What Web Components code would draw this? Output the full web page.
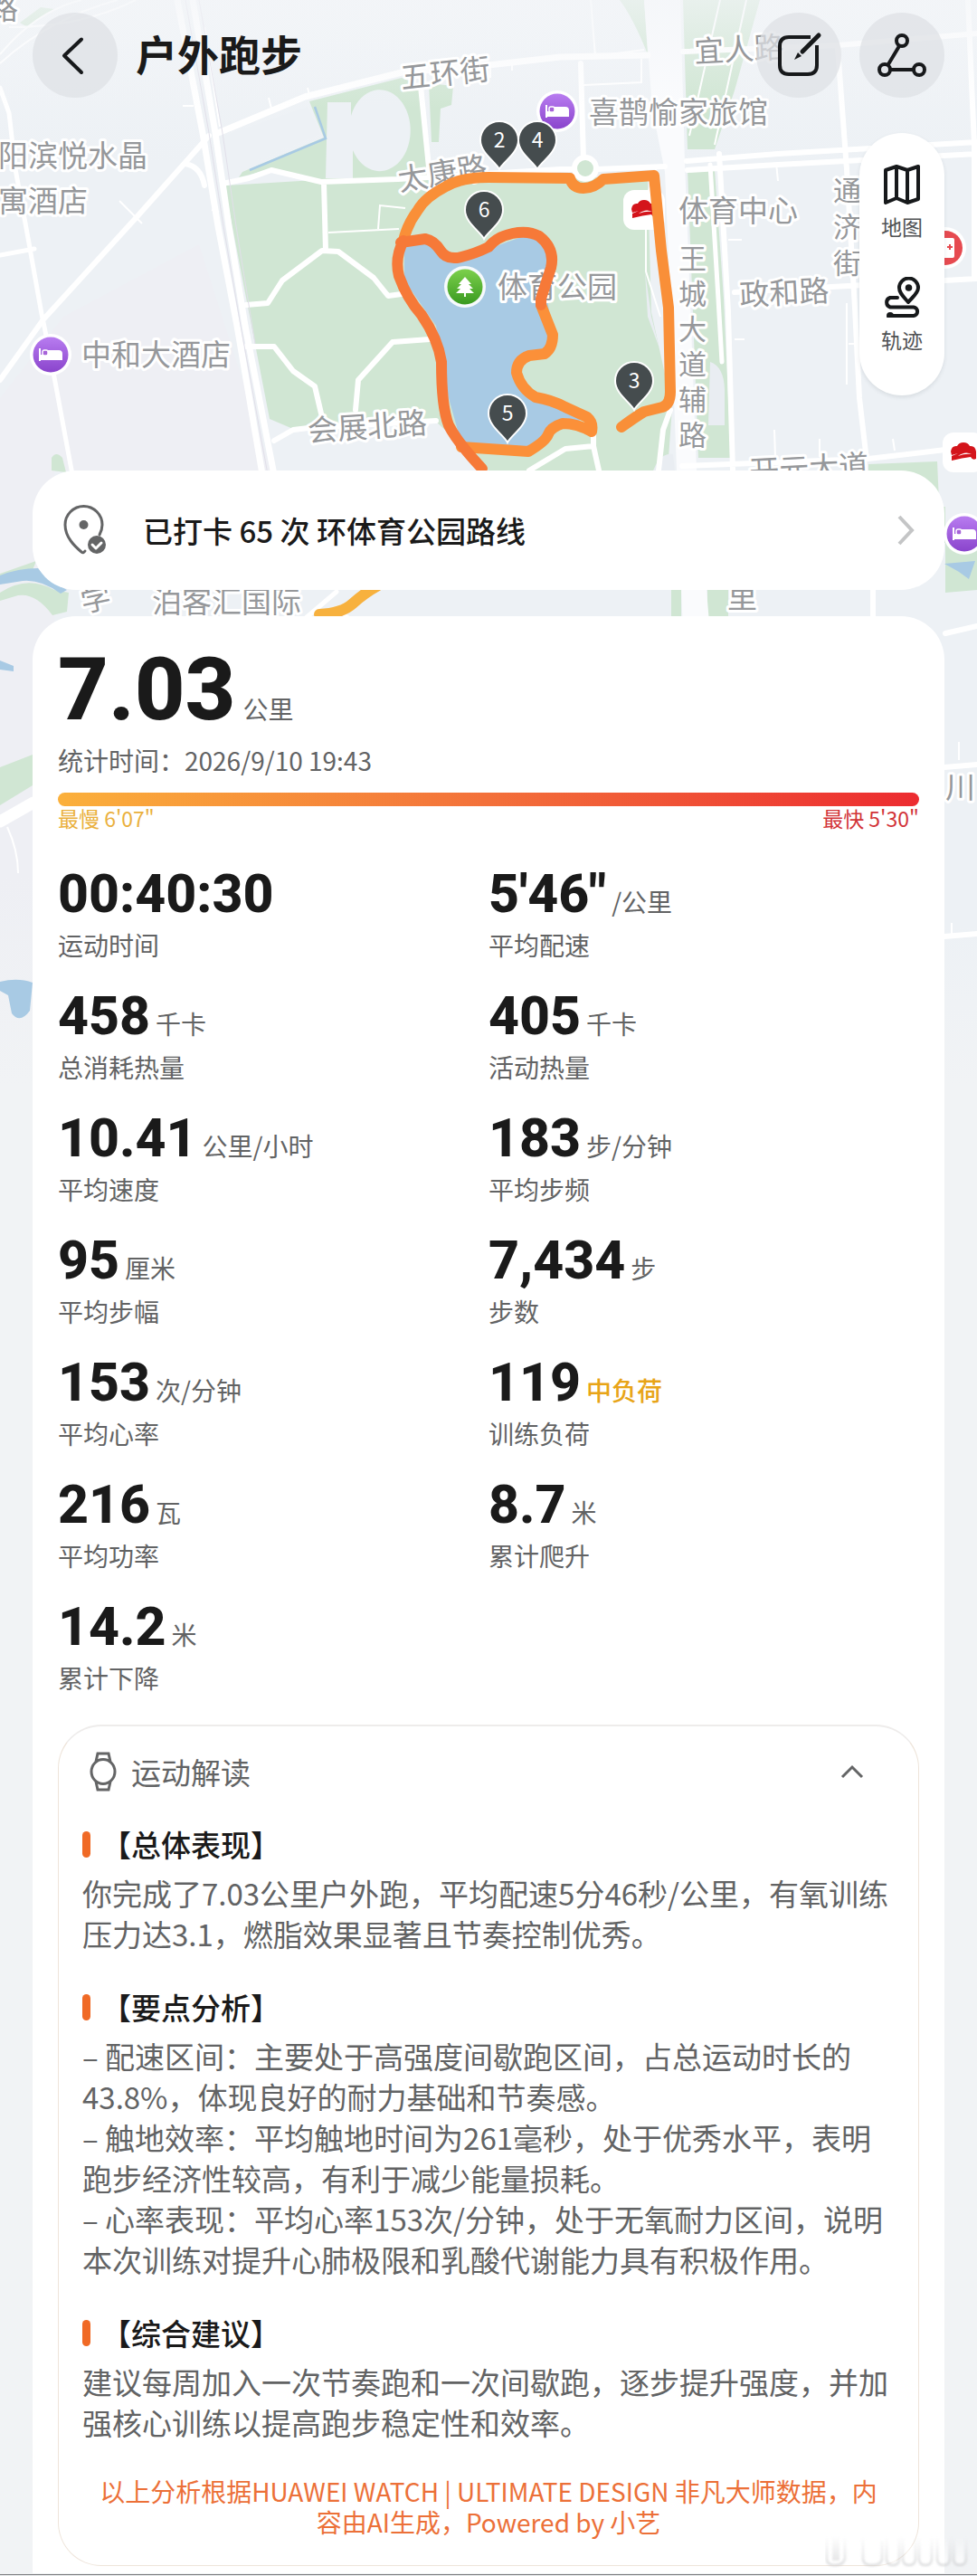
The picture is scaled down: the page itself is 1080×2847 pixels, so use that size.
<!DOCTYPE html>
<html lang="zh-CN">
<head>
<meta charset="utf-8">
<meta name="viewport" content="width=device-width, initial-scale=1">
<title>户外跑步</title>
<style>
  body {
    margin: 0;
    background: #f1f3f5;
    color: #1a1a1a;
    font-family: "Noto Sans CJK SC", sans-serif;
    --muted: #626364;
    --accent: #f06a26;
    --number-font: Roboto, "Noto Sans CJK SC", sans-serif;
  }
</style>
</head>
<body>
<run-page>
  <run-map slot="map"></run-map>
  <run-header slot="top">户外跑步</run-header>
  <map-tools slot="top"></map-tools>
  <route-card>已打卡 65 次 环体育公园路线</route-card>
  <summary-card>
    <run-distance slot="hero"><span>7.03</span><span slot="unit">公里</span><span slot="date">统计时间：2026/9/10 19:43</span></run-distance>
    <pace-bar slot="hero"><span slot="slow">最慢 6'07"</span><span slot="fast">最快 5'30"</span></pace-bar>
    <run-stat>00:40:30<span slot="label">运动时间</span></run-stat>
    <run-stat>5'46"<span slot="unit">/公里</span><span slot="label">平均配速</span></run-stat>
    <run-stat>458<span slot="unit">千卡</span><span slot="label">总消耗热量</span></run-stat>
    <run-stat>405<span slot="unit">千卡</span><span slot="label">活动热量</span></run-stat>
    <run-stat>10.41<span slot="unit">公里/小时</span><span slot="label">平均速度</span></run-stat>
    <run-stat>183<span slot="unit">步/分钟</span><span slot="label">平均步频</span></run-stat>
    <run-stat>95<span slot="unit">厘米</span><span slot="label">平均步幅</span></run-stat>
    <run-stat>7,434<span slot="unit">步</span><span slot="label">步数</span></run-stat>
    <run-stat>153<span slot="unit">次/分钟</span><span slot="label">平均心率</span></run-stat>
    <run-stat level="medium">119<span slot="unit">中负荷</span><span slot="label">训练负荷</span></run-stat>
    <run-stat>216<span slot="unit">瓦</span><span slot="label">平均功率</span></run-stat>
    <run-stat>8.7<span slot="unit">米</span><span slot="label">累计爬升</span></run-stat>
    <run-stat>14.2<span slot="unit">米</span><span slot="label">累计下降</span></run-stat>
    <insight-card slot="insight">
      <span slot="title">运动解读</span>
      <insight-section>
        <span slot="title">【总体表现】</span>
        <div>你完成了7.03公里户外跑，平均配速5分46秒/公里，有氧训练压力达3.1，燃脂效果显著且节奏控制优秀。</div>
      </insight-section>
      <insight-section>
        <span slot="title">【要点分析】</span>
        <div>– 配速区间：主要处于高强度间歇跑区间，占总运动时长的43.8%，体现良好的耐力基础和节奏感。</div>
        <div>– 触地效率：平均触地时间为261毫秒，处于优秀水平，表明跑步经济性较高，有利于减少能量损耗。</div>
        <div>– 心率表现：平均心率153次/分钟，处于无氧耐力区间，说明本次训练对提升心肺极限和乳酸代谢能力具有积极作用。</div>
      </insight-section>
      <insight-section>
        <span slot="title">【综合建议】</span>
        <div>建议每周加入一次节奏跑和一次间歇跑，逐步提升强度，并加强核心训练以提高跑步稳定性和效率。</div>
      </insight-section>
      <span slot="source">以上分析根据HUAWEI WATCH | ULTIMATE DESIGN 非凡大师数据，内容由AI生成，Powered by 小艺</span>
    </insight-card>
  </summary-card>
</run-page>

<script>
const define = (name, html) => {
  const template = document.createElement('template');
  template.innerHTML = html;
  customElements.define(name, class extends HTMLElement {
    constructor() {
      super();
      this.attachShadow({ mode: 'open' }).append(template.content.cloneNode(true));
    }
  });
};

/* Page: the map and the content share one grid cell */
define('run-page', `
<style>
  :host { display: grid; grid-template-columns: minmax(0, 1fr); position: relative; }
  .map, .content { grid-area: 1 / 1; }
  .map { align-self: start; }
  .content { display: flex; flex-direction: column; padding: 14px 36px 0; }
  .top { display: flex; flex-direction: column; gap: 39px; margin-bottom: 83px; }
  .cards { display: flex; flex-direction: column; gap: 29px; }
  footer { grid-area: 2 / 1; height: 2px; background: linear-gradient(#f1f3f5 50%, #77787a 50%); }
  .mark { position: absolute; right: 4px; bottom: 8px; width: 164px; height: 36px; fill: none; stroke: url(#fade); stroke-width: 3; opacity: .7; }
</style>
<div class="map"><slot name="map"></slot></div>
<main class="content">
  <div class="top"><slot name="top"></slot></div>
  <div class="cards"><slot></slot></div>
</main>
<footer></footer>
<svg class="mark" viewBox="0 0 164 36" aria-hidden="true">
  <defs>
    <linearGradient id="fade" gradientUnits="userSpaceOnUse" x1="0" y1="0" x2="0" y2="36"><stop stop-color="#d9dadc" stop-opacity="0"/><stop offset="1" stop-color="#cfd0d2"/></linearGradient>
    <linearGradient id="glow" x2="0" y2="1"><stop stop-color="#fff" stop-opacity="0"/><stop offset="1" stop-color="#fff"/></linearGradient>
    <filter id="soft"><feGaussianBlur stdDeviation="1"/></filter>
  </defs>
  <g filter="url(#soft)">
    <path d="M2 2V26Q2 33 11 33T22 26V2M42 4V27Q43 33 52 33T63 27V6M68 2V27Q69 33 75 33T82 27V2M86 2V27Q87 33 93 33T100 27V2M104 2V27Q105 33 111 33T118 27V2M124 2V27Q125 33 131 33T138 27V2M142 2V27Q143 33 149 33T156 27V2"/>
    <path d="M8 2h8v26H8Z" fill="url(#fade)" stroke="none"/>
    <path d="M46 6h12v24H46ZM71 4h8v26H71ZM89 4h8v26H89ZM107 4h8v26H107ZM127 4h8v26H127ZM145 4h8v26H145Z" fill="url(#glow)" stroke="none"/>
  </g>
</svg>`);

define('run-header', `
<style>
  :host { display: flex; align-items: center; gap: 20px; }
  h1 { flex: 1; margin: 0; padding-bottom: 6px; font-size: 46px; line-height: 60px; font-weight: 700; }
  button { width: 94px; height: 94px; padding: 0; border: 0; border-radius: 50%; background: rgba(222, 225, 229, .72); display: grid; place-items: center; }
  svg { width: 94px; height: 94px; fill: none; stroke: #17191b; stroke-width: 4; stroke-linecap: round; stroke-linejoin: round; }
</style>
<button aria-label="返回"><svg viewBox="0 0 94 94"><path d="M54 29.500 35 47.500l19 18.500"/></svg></button>
<h1><slot></slot></h1>
<button aria-label="编辑"><svg viewBox="0 0 94 94"><path d="M60 27H36q-10 0-10 10v21q0 10 10 10h21q10 0 10-10V36" stroke-linecap="butt"/><path d="M69 25 51 43" stroke-width="5"/><path d="M46 44l4 4-8 4Z" fill="#17191b" stroke="none"/></svg></button>
<button aria-label="分享"><svg viewBox="0 0 94 94"><circle cx="47" cy="31" r="6"/><circle cx="28" cy="63" r="6"/><circle cx="66" cy="63" r="6"/><path d="M44 37 32 57M34 63h25"/></svg></button>`);

define('map-tools', `
<style>
  :host { display: flex; flex-direction: column; align-self: flex-end; box-sizing: border-box; width: 94px; gap: 42px; padding: 34px 0 48px; border-radius: 47px; background: #fff; box-shadow: 0 2px 4px rgba(60, 70, 80, .12); }
  button { display: flex; flex-direction: column; align-items: center; gap: 10px; padding: 0; border: 0; background: none; font: inherit; font-size: 23px; line-height: 28px; color: #505254; }
  svg { width: 44px; height: 45px; fill: none; stroke: #17191b; stroke-width: 4; stroke-linecap: round; stroke-linejoin: round; }
</style>
<button><svg viewBox="0 0 44 45"><path d="M4 7 16 3l12 4 12-4v36l-12 4-12-5-12 5ZM16 3v35M28 7v36"/></svg>地图</button>
<button><svg viewBox="0 0 44 45"><path d="M29 28C24 22 19 18 19 12a10.500 10.500 0 0 1 21 0C40 18 34 22 29 28Z"/><circle cx="29.500" cy="12" r="1.800" fill="#17191b"/><path d="M17 23H9a5.500 5.500 0 0 0 0 10.500H35a4.800 4.800 0 0 1 0 9.500H9"/><circle cx="9" cy="43" r="2" fill="#17191b"/></svg>轨迹</button>`);

define('route-card', `
<style>
  :host { display: block; }
  a { display: flex; align-items: center; gap: 40px; height: 132px; box-sizing: border-box; padding: 0 32px; border-radius: 48px; background: #fff; color: inherit; text-decoration: none; font-size: 33px; line-height: 44px; font-weight: 500; }
  span { flex: 1; }
  .pin { width: 50px; height: 58px; fill: none; stroke: #646566; stroke-width: 3; stroke-linecap: round; stroke-linejoin: round; }
  .go { width: 20px; height: 34px; fill: none; stroke: #c4c5c6; stroke-width: 4; }
</style>
<a href="#route">
  <svg class="pin" viewBox="0 0 50 58"><path d="M42 34q3-6 3-11a20.500 20.500 0 0 0-41 0c0 14 11 24 18 30q2 2 4-1"/><circle cx="24.500" cy="23" r="5" fill="#646566" stroke="none"/><circle cx="39" cy="45" r="10" fill="#646566" stroke="none"/><path d="M34 45l4 4 6-6" stroke="#fff"/></svg>
  <span><slot></slot></span>
  <svg class="go" viewBox="0 0 20 34"><path d="M2 2l14 15L2 32"/></svg>
</a>`);

define('summary-card', `
<style>
  :host { display: block; border-radius: 48px 48px 0 0; background: #fff; padding: 24px 28px 8px; }
  .stats { display: grid; grid-template-columns: 1fr 1fr; row-gap: 31px; margin: 40px 0 35px; }
</style>
<slot name="hero"></slot>
<div class="stats"><slot></slot></div>
<slot name="insight"></slot>`);

define('run-distance', `
<style>
  :host { display: block; color: var(--muted); font-size: 28px; }
  .row { display: flex; align-items: baseline; gap: 8px; height: 115px; line-height: 28px; }
  strong { font-family: var(--number-font); font-size: 97px; line-height: 115px; font-weight: 800; color: #1a1a1a; }
  .date { line-height: 40px; }
</style>
<div class="row"><strong><slot></slot></strong><slot name="unit"></slot></div>
<div class="date"><slot name="date"></slot></div>`);

define('pace-bar', `
<style>
  :host { display: block; padding-top: 16px; }
  .bar { height: 15px; border-radius: 8px; background: linear-gradient(90deg, #fbb03b, #f3703a 50%, #ec2b30); }
  .ends { display: flex; justify-content: space-between; font-size: 23px; line-height: 26px; color: #eab03c; }
  .fast { color: #d23338; }
</style>
<div class="bar"></div>
<div class="ends"><span><slot name="slow"></slot></span><span class="fast"><slot name="fast"></slot></span></div>`);

define('run-stat', `
<style>
  :host { display: flex; flex-direction: column; gap: 9px; font-size: 28px; color: var(--muted); }
  .row { display: flex; align-items: baseline; gap: 6px; height: 61px; line-height: 28px; }
  strong { font-family: var(--number-font); font-size: 59px; line-height: 61px; font-weight: 800; color: #1a1a1a; }
  .label { line-height: 34px; }
  :host([level="medium"]) .unit { color: #e8a417; font-weight: 500; }
</style>
<div class="row"><strong><slot></slot></strong><span class="unit"><slot name="unit"></slot></span></div>
<div class="label"><slot name="label"></slot></div>`);

define('insight-card', `
<style>
  :host { display: flex; flex-direction: column; gap: 36px; padding: 28px 26px 31px; border: 1px solid #eee4da; border-top: 2px solid #eeeceb; border-radius: 48px; color: var(--muted); font-size: 33px; }
  button { display: flex; align-items: center; gap: 12px; padding: 0 34px 0 6px; border: 0; background: none; font: inherit; color: inherit; text-align: left; line-height: 44px; }
  button span { flex: 1; }
  svg { fill: none; stroke: #646566; stroke-width: 3; }
  .watch { width: 36px; height: 44px; }
  .fold { width: 26px; height: 16px; }
  .source { padding: 0 8px; font-size: 28px; line-height: 34px; text-align: center; color: #ec7038; }
</style>
<button aria-expanded="true">
  <svg class="watch" viewBox="0 0 36 44"><ellipse cx="17" cy="22" rx="13" ry="13.500"/><path d="M9 11l2-9h12l2 9M9 33l2 9h12l2-9"/></svg>
  <span><slot name="title"></slot></span>
  <svg class="fold" viewBox="0 0 26 16"><path d="M2 14 13 3l11 11"/></svg>
</button>
<slot></slot>
<div class="source"><slot name="source"></slot></div>`);

define('insight-section', `
<style>
  :host { display: flex; flex-direction: column; gap: 9px; line-height: 45px; }
  h2 { display: flex; align-items: center; gap: 12px; margin: 0; font-size: 33px; line-height: 45px; font-weight: 500; color: #1a1a1a; }
  h2::before { content: ""; width: 9px; height: 29px; border-radius: 5px; background: var(--accent); }
</style>
<h2><slot name="title"></slot></h2>
<div><slot></slot></div>`);

/* Map */
const pin = (n, x, y) => `<g transform="translate(${x} ${y})"><path d="M0 32C-4 24-21 14-21 0a21 21 0 0 1 42 0C21 14 4 24 0 32Z" fill="#454c4e" stroke="#fff" stroke-width="2"/><text class="num" y="8" text-anchor="middle">${n}</text></g>`;
const hotel = (x, y) => `<g transform="translate(${x} ${y})"><circle r="23" fill="#fff"/><circle r="19.500" fill="url(#violet)"/><path d="M-12-7v14M-12 5h24v-6q0-3-3-3H-3v5h-9" fill="#fff" stroke="#fff" stroke-width="2"/><rect x="-9" y="-5" width="6" height="6" rx="2" fill="#a763d8" stroke="#fff" stroke-width="1.500"/></g>`;
const venue = (x, y) => `<g transform="translate(${x} ${y})"><rect x="-23" y="-22" width="46" height="44" rx="12" fill="#fff"/><path d="M-14-1Q-13-8-7-7-5-11 0-11T7-7Q13-8 14-1V7Q10 9 8 5-1 6-13 9V4L-6 1-13 3ZM-6 4Q2 1 9 2 2-2-6 4Z" fill="#d4141b" fill-rule="evenodd"/></g>`;
const label = (s, x, y, turn = 0) => `<text x="${x}" y="${y}" transform="rotate(${turn} ${x} ${y})">${s}</text>`;
const column = (s, x, y, step) => `<text x="${[...s].map(() => x).join(' ')}" y="${[...s].map((c, i) => y + i * step).join(' ')}" class="down">${s}</text>`;

define('run-map', `
<style>
  :host { display: block; overflow: hidden; }
  svg { display: block; width: 100%; height: auto; }
  .road { fill: none; stroke: #fff; stroke-linejoin: round; stroke-linecap: round; stroke-width: 7; }
  .thin { fill: none; stroke: #fff; stroke-width: 3; }
  .park { fill: #d0e6d3; }
  .water { fill: #a8cae4; }
  .names text { font-size: 33px; fill: #96989b; stroke: #fff; stroke-width: 6; stroke-linejoin: round; paint-order: stroke; }
  .names .down { font-size: 31px; }
  .num { font-size: 23px; fill: #fff; }
  .track { fill: none; stroke-width: 12; stroke-linecap: round; stroke-linejoin: round; }
</style>
<svg viewBox="0 0 1080 1200" role="img" aria-label="跑步轨迹地图">
  <defs>
    <linearGradient id="ground" x2="0" y2="1"><stop stop-color="#f1f4f7"/><stop offset=".15" stop-color="#edf1f5"/><stop offset=".85" stop-color="#edf1f5"/><stop offset="1" stop-color="#f1f3f5"/></linearGradient>
    <linearGradient id="lilac" x2="0" y2="1"><stop stop-color="#eeeff4"/><stop offset=".75" stop-color="#eeeff4"/><stop offset="1" stop-color="#f1f3f5"/></linearGradient>
    <linearGradient id="violet" x2="0" y2="1"><stop stop-color="#b87cf0"/><stop offset="1" stop-color="#8a44cc"/></linearGradient>
    <linearGradient id="leaf" x2="0" y2="1"><stop stop-color="#7cd04c"/><stop offset="1" stop-color="#3a9a20"/></linearGradient>
    <linearGradient id="haze" x2="0" y2="1"><stop stop-color="#f3f5f8" stop-opacity=".7"/><stop offset="1" stop-color="#f3f5f8" stop-opacity="0"/></linearGradient>
  </defs>
  <rect width="1080" height="1200" fill="url(#ground)"/>
  <path d="M70 350 220 270 300 520H60V1200H0V440Z" fill="url(#lilac)"/>
  <g class="park">
    <path d="M248 205 365 198 540 196H716L720 345 743 450 738 520H540L482 466 324 474 298 463Z"/>
    <path d="M342 112 444 86 465 95 472 195 358 202 300 187 264 196 268 190 358 152Z"/>
    <path d="M474 92 501 95 499 116 487 120 485 157 477 157Z"/>
    <path d="M685 0H712L716 60Q700 20 685 0ZM755 0H840L812 100 790 165H760ZM760 187H790L800 330 808 506H772Z"/>
    <path d="M960 513 1036 510 1040 600H1080V652L1045 655V560H960ZM742 640H753V690H742ZM782 640H805V690H782ZM22 25 45 8 60 10 30 30Z"/>
    <path d="M57 520V506Q62 498 69 506L73 522ZM0 634 40 620 36 630 0 640ZM0 655Q30 635 60 652L76 655 74 676 58 680Q40 655 20 658L0 664ZM0 848 36 834V868L0 890Z"/>
  </g>
  <path d="M340 118 354 148 262 186 246 198 242 152Z" fill="#edf1f5"/>
  <path d="M362 113H388V128A34 45 0 1 1 390 166V197H360Z" fill="#edf1f5"/>
  <path d="M713 300 720 350 729 385 716 350ZM785 400Q800 405 801 430V470H783ZM722 520Q730 500 744 502L746 520Z" fill="#e9edf2"/>
  <path d="M348 118 360 153 276 188" fill="none" stroke="#a8cae4" stroke-width="2.500"/>
  <g class="water">
    <path d="M447 268 479 266 510 287 540 275 590 257 612 283 603 320 612 373 600 392 575 400 570 413 590 437 650 462 609 473 585 495 510 490 496 440 482 360 447 310Z"/>
    <path d="M0 636Q20 628 42 628 55 642 74 652L67 656Q45 640 25 642L0 646ZM0 730 15 736V742L0 740ZM0 1085Q20 1080 36 1086L33 1117Q22 1132 13 1120L9 1100 0 1095ZM1044 623 1078 620 1071 640 1060 632Z"/>
  </g>
  <path d="M712 0H752L757 180 764 360 770 520 785 700H755L748 520 741 330 735 190 721 120Z" fill="#fafbfd"/>
  <g class="road">
    <path d="M196 0 224 147 241 250 262 360 291 530M213 0 238 147 253 250 271 360 304 530"/>
    <path d="M241 147 337 107 444 80 540 72 619 63 716 61"/>
    <path d="M231 150 151 240 48 353 0 420M205 181Q222 184 226 205" stroke-width="6"/>
    <path d="M0 97 10 125 17 187 31 263 46 347 55 390 81 530M0 282 38 275" stroke-width="5"/>
    <path d="M246 203 275 197 300 188 355 201 440 198 620 187H660L735 184M358 202 360 277M272 337 296 335 312 310 356 277 374 278 413 307 429 327 444 325M272 383 303 383 324 410 348 427 355 457M475 375 434 378 396 420 393 453M303 487 324 475 341 473 482 465M465 95 475 195" stroke-width="6"/>
    <path d="M759 178 860 170 1080 157M760 188 860 182 1080 170M755 57 926 50 1080 37M926 53 936 187 945 340 950 440 957 500M1070 0 1077 160V308M812 323 1080 308M795 170 805 345 810 520M642 70 645 177M585 520 625 496 656 493 662 520M656 480V493M741 453 733 475 728 520M754 515 960 507 1045 497 1080 494M965 650V690M1045 700 1080 692M1044 848 1080 845M1044 1035 1080 1032" stroke-width="6"/>
    <path d="M0 908 37 887" stroke-width="13"/>
    <path d="M338 683 372 654M785 182 794 330 798 400" stroke-width="5"/>
  </g>
  <circle cx="647" cy="186" r="12" fill="#d0e6d3" stroke="#fff" stroke-width="6"/>
  <g class="thin">
    <path d="M0 70Q55 20 130 0M0 60Q40 12 90 0M10 30Q90 30 150 0M226 30 243 140M202 117H214M234 232 242 234M132 222 157 247M297 108 300 120M340 97 342 105M363 257 441 253M418 253 420 227 448 230M653 0 658 62 712 55M645 94 709 91V65M796 0 762 150M825 0 790 160M542 73V86M566 72V78M858 180 860 200M805 265H820M812 375H823M938 380H947M936 335V425M987 485 989 498M856 475 857 505M906 485V505M8 914Q20 940 20 965M726 185 714 220V300L730 350M1060 820V840M1052 1020V1032" stroke-width="2"/>
    <path d="M220 0 246 147 261 250 282 380M205 0 231 147 247 250 266 360 297 530" stroke="#e1dfe9" stroke-width="1"/>
  </g>
  <rect width="1080" height="120" fill="url(#haze)"/>
  <g class="names">
    ${label('路', -13, 21)}
    ${label('五环街', 444, 98, -6)}
    ${label('宜人路', 768, 69, -3)}
    ${label('喜鹊愉家旅馆', 651, 136)}
    ${label('阳滨悦水晶', -2, 184)}
    ${label('寓酒店', -2, 234)}
    ${label('太康路', 442, 211, -9)}
    ${label('体育中心', 750, 245)}
    ${label('体育公园', 550, 329)}
    ${label('政和路', 818, 338, -3)}
    ${label('中和大酒店', 90, 404)}
    ${label('会展北路', 341, 488, -4)}
    ${label('开元大道', 829, 533, -3)}
    ${label('泊客汇国际', 168, 677)}
    ${column('王城大道辅路', 750, 297, 39)}
    ${column('通济街', 921, 222, 40)}
    ${label('学', 92, 677, -12)}
    ${label('里', 804, 672)}
    ${label('川', 1045, 882)}
  </g>
  ${hotel(616, 123)}${hotel(56, 392)}${hotel(1066, 590)}${hotel(372, 699)}
  ${venue(712, 232)}${venue(1065, 500)}
  <g transform="translate(1045 274)"><circle r="23" fill="#fff"/><circle r="19" fill="#e64a50"/><rect x="-10" y="-11" width="20" height="22" rx="2" fill="#fff"/><path d="M2-1h6M5-4v6" stroke="#e64a50" stroke-width="2"/></g>
  <g transform="translate(514 317)"><circle r="23" fill="#fff" opacity=".9"/><circle r="19.500" fill="url(#leaf)"/><path d="M0-11 7-3H4l5 5H5l5 5H1v4h-2V7h-9l5-5h-4l5-5h-3Z" fill="#fff"/></g>
  <g class="track">
    <path d="M353 679Q378 678 390 667T418 647" stroke="#f7b13e"/>
    <path d="M687 472Q702 461 712 455L732 450Q741 447 741 433L739 340 731 277 723 194 667 198Q657 208 645 208T630 197L540 196Q510 196 493 206 470 218 462 232 450 248 446 266" stroke="#f98f38"/>
    <path d="M598 337 611 370Q611 385 602 391L585 393Q571 398 571 412 576 430 592 439 610 442 625 450L649 461Q656 467 654 477 638 468 622 468 609 472 606 480T584 499L540 496 510 494" stroke="#fb9039"/>
    <path d="M446 266Q436 285 441 305 450 330 466 348 484 374 488 400 488 450 496 470 505 488 533 518M443 268 470 264Q480 266 487 277T510 284 540 273C552 258 580 252 596 261Q614 275 609 296L598 330V337" stroke="#f67938"/>
  </g>
  ${pin(2, 552, 155)}${pin(4, 594, 155)}${pin(6, 535, 232)}${pin(5, 561, 457)}${pin(3, 701, 421)}
</svg>`);
</script>
</body>
</html>
